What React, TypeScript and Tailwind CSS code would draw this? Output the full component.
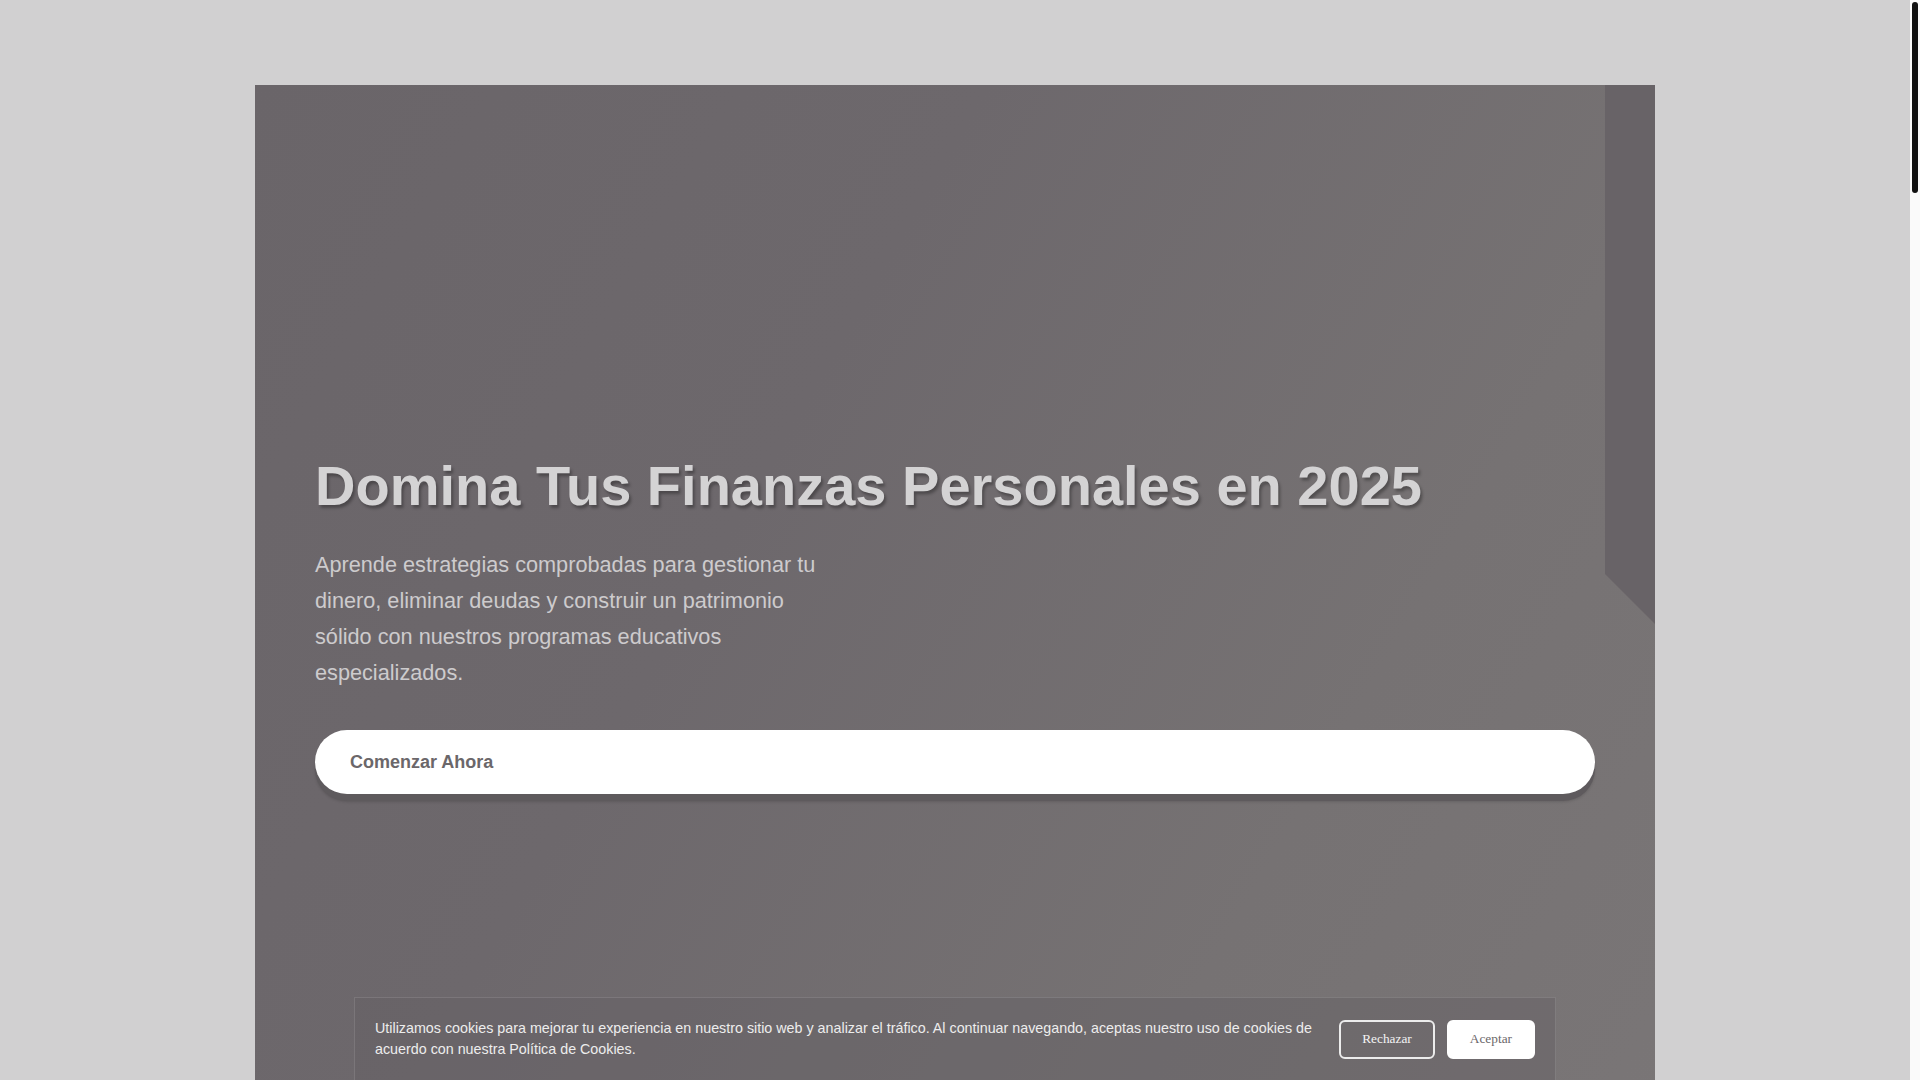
import React from "react";

export default function App() {
  return (
    <div className="flex h-[1080px] w-[1920px] overflow-hidden bg-white font-['Liberation_Sans',Arial,sans-serif]">
      <div className="relative h-[1080px] w-[1910px] bg-[#d1d0d1] pt-[85px]">
        <section className="relative mx-auto h-[1200px] w-[1400px] bg-[linear-gradient(120deg,#6a6569_0%,#6d686c_35%,#767273_70%,#7a7677_100%)] px-[60px] pt-[367px]">
          <div className="pointer-events-none absolute right-0 top-0 h-[539px] w-[50px] bg-[#686367] [clip-path:polygon(0_0,100%_0,100%_100%,0_calc(100%-50px))]" />
          <h1 className="relative text-[56px] font-bold leading-[67px] text-[#d4d3d4] [text-shadow:2px_3px_3px_rgba(0,0,0,0.3)]">
            Domina Tus Finanzas Personales en 2025
          </h1>
          <p className="relative mt-[28px] max-w-[520px] text-[21.7px] leading-[36px] text-[#cdcbcd]">
            Aprende estrategias comprobadas para gestionar tu dinero, eliminar deudas y construir un patrimonio sólido con nuestros programas educativos especializados.
          </p>
          <button className="relative mt-[39px] flex h-[64px] w-full items-center rounded-full bg-white pl-[35px] text-[18px] font-bold text-[#6b676a] shadow-[0_7px_0_#5e5a5d,0_8px_3px_rgba(0,0,0,0.15)]">
            Comenzar Ahora
          </button>
        </section>

        <div className="absolute left-[354px] top-[997px] flex h-[84px] w-[1202px] items-center gap-[26px] border border-[rgba(255,255,255,0.12)] bg-[rgba(100,95,99,0.45)] px-[20px]">
          <p className="flex-1 text-[14.3px] leading-[21px] text-[#ededed]">
            Utilizamos cookies para mejorar tu experiencia en nuestro sitio web y analizar el tráfico. Al continuar navegando, aceptas nuestro uso de cookies de acuerdo con nuestra Política de Cookies.
          </p>
          <div className="flex items-center gap-[12px] font-['Liberation_Serif','Times_New_Roman',serif]">
            <button className="h-[39px] rounded-[6px] border-2 border-[#ececec] px-[21px] text-[13.33px] text-[#f4f4f4]">
              Rechazar
            </button>
            <button className="h-[39px] rounded-[6px] border-2 border-white bg-white px-[21px] text-[13.33px] text-[#6b676a]">
              Aceptar
            </button>
          </div>
        </div>
      </div>
      <div className="relative h-[1080px] w-[10px] bg-[#fafafa]">
        <div className="absolute left-[2px] top-[2px] h-[191px] w-[6px] rounded-[3px] bg-[#111111]" />
      </div>
    </div>
  );
}
